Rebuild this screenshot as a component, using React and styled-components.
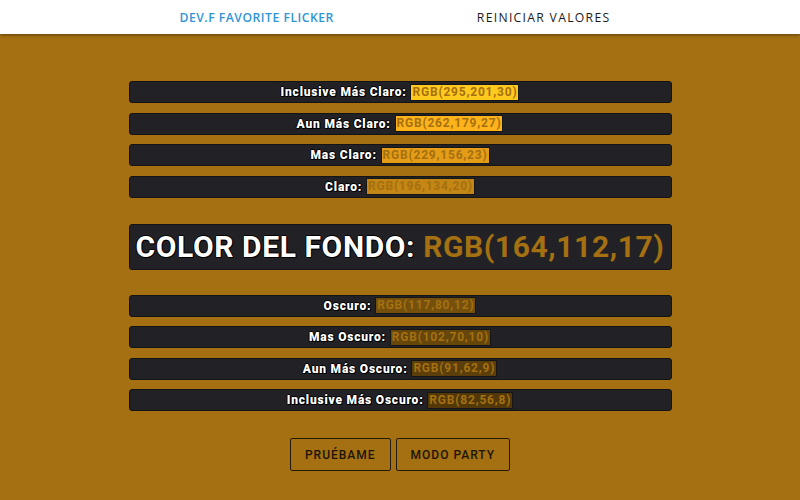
import React from "react"
import styled, { createGlobalStyle } from "styled-components"

const base = [164, 112, 17]

const lighter = [
  { label: "Inclusive Más Claro", rgb: [295, 201, 30] },
  { label: "Aun Más Claro", rgb: [262, 179, 27] },
  { label: "Mas Claro", rgb: [229, 156, 23] },
  { label: "Claro", rgb: [196, 134, 20] },
]

const darker = [
  { label: "Oscuro", rgb: [117, 80, 12] },
  { label: "Mas Oscuro", rgb: [102, 70, 10] },
  { label: "Aun Más Oscuro", rgb: [91, 62, 9] },
  { label: "Inclusive Más Oscuro", rgb: [82, 56, 8] },
]

const clamp = (v) => Math.min(255, v)
const toCss = (rgb) => `rgb(${rgb.map(clamp).join(",")})`
const toText = (rgb) => `RGB(${rgb.join(",")})`

function ShadeRow({ label, rgb }) {
  return (
    <Row>
      {label}:{" "}
      <Swatch bg={toCss(rgb)}>{toText(rgb)}</Swatch>
    </Row>
  )
}

function App() {
  return (
    <>
      <GlobalStyle />
      <Page>
        <Nav>
          <NavLink active>DEV.F FAVORITE FLICKER</NavLink>
          <NavLink>REINICIAR VALORES</NavLink>
        </Nav>
        <Content>
          <Group>
            {lighter.map((s) => (
              <ShadeRow key={s.label} {...s} />
            ))}
          </Group>
          <MainRow>
            COLOR DEL FONDO: <MainValue>{toText(base)}</MainValue>
          </MainRow>
          <Group>
            {darker.map((s) => (
              <ShadeRow key={s.label} {...s} />
            ))}
          </Group>
          <Buttons>
            <Button>PRUÉBAME</Button>
            <Button>MODO PARTY</Button>
          </Buttons>
        </Content>
      </Page>
    </>
  )
}

export default App

const outline =
  "-1px 0 0 #000, 1px 0 0 #000, 0 -1px 0 #000, 0 1px 0 #000, 1px 1px 0 #000"

const GlobalStyle = createGlobalStyle`
  html, body {
    margin: 0;
    padding: 0;
    background: rgb(164, 112, 17);
    font-family: Roboto, "Liberation Sans", sans-serif;
  }
`
const Page = styled.div`
  width: 800px;
  height: 500px;
  background: rgb(164, 112, 17);
  overflow: hidden;
`
const Nav = styled.nav`
  height: 34px;
  background: #fff;
  display: flex;
  align-items: center;
  justify-content: center;
  gap: 143px;
  padding-right: 10px;
  box-shadow: 0 1px 3px rgba(0, 0, 0, 0.45);
`
const NavLink = styled.a`
  font-family: "Open Sans", "Liberation Sans", sans-serif;
  font-size: 12.2px;
  letter-spacing: ${(p) => (p.active ? "0.5px" : "1.3px")};
  font-weight: ${(p) => (p.active ? 600 : 400)};
  color: ${(p) => (p.active ? "#2f96d6" : "#1a1a1a")};
  padding-top: 1px;
`
const Content = styled.div`
  display: flex;
  flex-direction: column;
  align-items: center;
  padding-top: 47px;
`
const Group = styled.div`
  display: flex;
  flex-direction: column;
  gap: 9.5px;
`
const Row = styled.div`
  width: 541px;
  height: 20px;
  box-sizing: content-box;
  background: #222226;
  border: 1px solid #141414;
  border-radius: 3px;
  display: flex;
  align-items: center;
  justify-content: center;
  white-space: pre;
  color: #fff;
  font-weight: 900;
  font-size: 12px;
  letter-spacing: 0.8px;
  text-shadow: ${outline};
`
const Swatch = styled.span`
  background: ${(p) => p.bg};
  color: rgb(164, 112, 17);
  text-shadow: none;
  border: 1px solid #161616;
  padding: 0 1px;
  line-height: 15px;
  font-weight: 700;
`
const MainRow = styled.div`
  width: 541px;
  height: 44px;
  margin: 26px 0 25px;
  background: #222226;
  border: 1px solid #141414;
  border-radius: 3px;
  display: flex;
  align-items: center;
  justify-content: center;
  white-space: pre;
  color: #fff;
  font-weight: 700;
  font-size: 30px;
  letter-spacing: 0.6px;
  text-shadow: ${outline};
`
const MainValue = styled.span`
  color: rgb(164, 112, 17);
  text-shadow: none;
`
const Buttons = styled.div`
  display: flex;
  gap: 5px;
  margin-top: 27px;
`
const Button = styled.button`
  height: 33px;
  padding: 0 14px;
  background: transparent;
  border: 1px solid #241a08;
  border-radius: 2px;
  font-family: Roboto, "Liberation Sans", sans-serif;
  font-weight: 500;
  font-size: 12px;
  letter-spacing: 1px;
  color: #1c1407;
`
